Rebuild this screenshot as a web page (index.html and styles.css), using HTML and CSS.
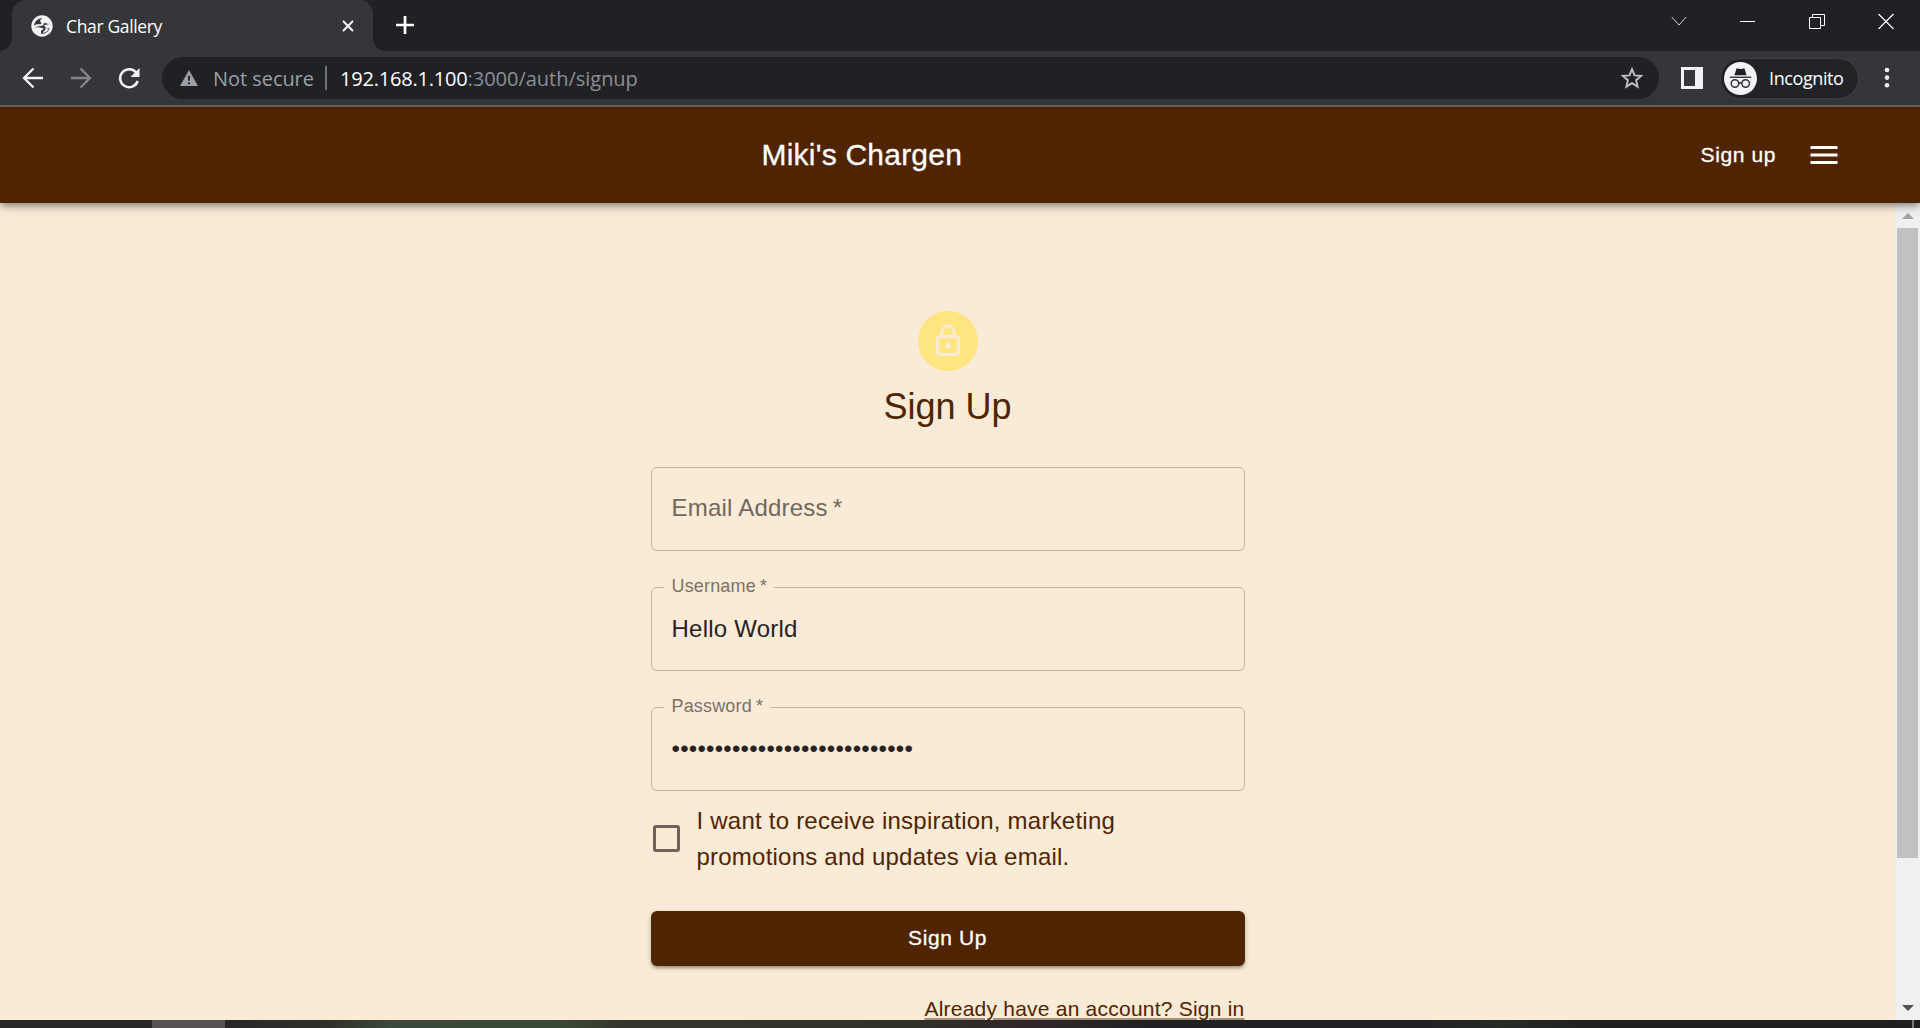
FILE: index.html
```html
<!DOCTYPE html>
<html lang="en">
<head>
<meta charset="utf-8">
<title>Char Gallery</title>
<link rel="stylesheet" href="styles.css">
</head>
<body>
<div class="tabstrip">
  <div class="tab">
    <svg class="globe" viewBox="0 0 22 22"><circle cx="11" cy="11" r="10.700" fill="#f1f3f4"/><path d="M3 10.500C3.500 6.500 7 3.300 11.500 3c-1.500 1-2.300 1.800-2.300 3 0 1.300 1.200 1.300 1.200 2.300 0 .7-.6 1-1.400 1H6.800C5.500 9.300 4.500 9.800 3 10.500zM3.200 12.200H8c2 0 2.300 1 3.700 1 1.200 0 1 1.300 0 1.600-1.300.4-1.700 1-1.700 2v2c4 .5 7.600-2 8.700-5.800-.8.400-2 .500-3 .200-1.500-.5-1.300-2-2.600-2.700-1.200-.6-1-1.800.2-2.300 1.500-.6 2.400.9 5.300.8" fill="#35363a"/><path d="M13.500 13c2.300-.2 2.500 1 4.300 1-1.300 2.300-3.200 3.700-5.800 4-.1-1.400.7-2 1.800-2.600 1.100-.6 1.100-1.900-.3-2.400z" fill="#f1f3f4"/></svg>
    <span class="tab-title">Char Gallery</span>
    <svg class="tab-close" viewBox="0 0 12 12"><path d="M1 1l10 10M11 1L1 11" stroke="#f1f3f4" stroke-width="2"/></svg>
  </div>
  <svg class="new-tab" viewBox="0 0 18 18"><path d="M9 0v18M0 9h18" stroke="#fff" stroke-width="2.700"/></svg>
  <div class="window-controls">
    <svg viewBox="0 0 16 16"><path d="M.8 4L8 12l7.200-8" stroke="#d5d6d7" fill="none"/></svg>
    <svg viewBox="0 0 16 16"><path d="M0 8.500h15" stroke="#fff"/></svg>
    <svg viewBox="0 0 16 16"><path d="M.5 4.500h11v11H.5zM3.500 4.500v-3h12v11h-3.500" stroke="#fff" fill="none"/></svg>
    <svg viewBox="0 0 16 16"><path d="M.5 1l15 15M15.500 1l-15 15" stroke="#fff" stroke-width="1.200"/></svg>
  </div>
</div>

<div class="toolbar">
  <svg class="nav-icon" viewBox="0 0 24 24"><path d="M22 12H3M12.500 2.500L3 12l9.500 9.500" stroke="#f1f3f4" stroke-width="2.300" fill="none"/></svg>
  <svg class="nav-icon" viewBox="0 0 24 24"><path d="M2 12h19M11.500 2.500L21 12l-9.500 9.500" stroke="#85868a" stroke-width="2.300" fill="none"/></svg>
  <svg class="nav-icon" viewBox="0 0 24 24"><path d="M19.300 6.700A9 9 0 1 0 20.700 15" stroke="#f1f3f4" stroke-width="2.500" fill="none"/><path d="M22.500 2v9h-9z" fill="#f1f3f4"/></svg>
  <div class="address">
    <svg class="warning" viewBox="0 0 18 16"><path d="M9 0l9 16H0z" fill="#9aa0a6"/><path d="M9 5.800v5M9 12.200v2" stroke="#202124" stroke-width="1.800"/></svg>
    <span class="insecure">Not secure</span>
    <span class="divider"></span>
    <span class="url"><b>192.168.1.100</b>:3000/auth/signup</span>
    <svg class="star" viewBox="0 0 22 22"><path d="M11 2.200l2.500 6.200 6.600.5-5 4.300 1.500 6.400-5.600-3.500-5.600 3.500 1.500-6.400-5-4.300 6.600-.5z" stroke="#bdc1c6" stroke-width="1.900" fill="none"/></svg>
  </div>
  <svg class="panel" viewBox="0 0 22 22"><path fill-rule="evenodd" d="M0 0h22v22H0zM3 3v16h11V3z" fill="#f1f3f4"/></svg>
  <div class="profile">
    <svg viewBox="0 0 34 34"><circle cx="17" cy="17" r="17" fill="#f1f3f4"/><path d="M13 6.500q4 1.300 8 0l2.300 7.200H10.700z" fill="#202124"/><path d="M6 15.700h22" stroke="#202124" stroke-width="1.300"/><g fill="none" stroke="#303135" stroke-width="1.500"><circle cx="11.300" cy="22.200" r="3.900"/><circle cx="22.300" cy="22.200" r="3.900"/><path d="M15.200 22q1.600-1.200 3.200 0"/></g></svg>
    <span>Incognito</span>
  </div>
  <svg class="dots" viewBox="0 0 6 22"><g fill="#f1f3f4"><circle cx="3" cy="3" r="2.300"/><circle cx="3" cy="10.600" r="2.300"/><circle cx="3" cy="18.300" r="2.300"/></g></svg>
</div>

<header class="appbar">
  <h1 class="brand">Miki's Chargen</h1>
  <a class="appbar-link">Sign up</a>
  <svg class="menu" viewBox="0 0 36 36"><path d="M4.500 27h27v-3h-27v3zm0-7.500h27v-3h-27v3zM4.500 9v3h27V9h-27z" fill="#fff"/></svg>
</header>

<div class="viewport">
  <main class="page">
    <form class="signup">
      <div class="avatar"><svg viewBox="0 0 24 24"><path fill="#faebd7" d="M12 17c1.100 0 2-.9 2-2s-.9-2-2-2-2 .9-2 2 .9 2 2 2zm6-9h-1V6c0-2.760-2.240-5-5-5S7 3.240 7 6v2H6c-1.100 0-2 .9-2 2v10c0 1.100.9 2 2 2h12c1.100 0 2-.9 2-2V10c0-1.100-.9-2-2-2zM8.900 6c0-1.710 1.390-3.100 3.100-3.100s3.100 1.390 3.100 3.100v2H8.900V6zM18 20H6V10h12v10z"/></svg></div>
      <h2 class="heading">Sign Up</h2>
      <div class="fields">
        <div class="field"><span class="placeholder">Email Address<i>*</i></span></div>
        <div class="field"><span class="label">Username<i>*</i></span><span>Hello World</span></div>
        <div class="field"><span class="label">Password<i>*</i></span><span>••••••••••••••••••••••••••••</span></div>
      </div>
      <div class="consent">
        <span class="checkbox"></span>
        <span>I want to receive inspiration, marketing<br>promotions and updates via email.</span>
      </div>
      <div class="submit">Sign Up</div>
      <a class="signin">Already have an account? Sign in</a>
    </form>
  </main>
  <div class="scrollbar">
    <svg viewBox="0 0 12 6"><path d="M0 6l6-6 6 6z" fill="#a3a3a3"/></svg>
    <div class="thumb"></div>
    <svg viewBox="0 0 12 6"><path d="M0 0h12L6 6z" fill="#505050"/></svg>
  </div>
</div>
<div class="taskbar"><span class="task"></span><span class="show-desktop"></span></div>
</body>
</html>
```
FILE: styles.css
```css
* { box-sizing: border-box; }
html, body { margin: 0; height: 1028px; overflow: hidden; }
body { display: flex; flex-direction: column; font-family: "Liberation Sans", Arial, sans-serif; }
svg { display: block; flex: none; }

.tabstrip { display: flex; height: 51px; flex: none; background: #202124; font-family: "Open Sans", sans-serif; }
.tab { position: relative; display: flex; align-items: center; width: 361px; margin-left: 12px; padding: 0 19px 0 19px; background: #35363a; border-radius: 14px 14px 0 0; }
.tab::before, .tab::after { content: ""; position: absolute; bottom: 0; width: 12px; height: 12px; }
.tab::before { left: -12px; background: radial-gradient(circle at 0 0, transparent 11.5px, #35363a 12px); }
.tab::after { right: -12px; background: radial-gradient(circle at 100% 0, transparent 11.5px, #35363a 12px); }
.globe { width: 22px; height: 22px; }
.tab-title { flex: 1; margin-left: 13px; font-size: 17.5px; letter-spacing: -0.35px; line-height: 24px; color: #fff; white-space: nowrap; }
.tab-close { width: 12px; height: 12px; }
.new-tab { width: 18px; height: 18px; margin: 16px 0 0 23px; }
.window-controls { display: flex; gap: 53px; margin: 13px 26px 0 auto; }
.window-controls svg { width: 16px; height: 16px; }

.toolbar { display: flex; align-items: center; height: 56px; flex: none; padding: 0 30px 0 21px; background: #35363a; border-bottom: 2px solid #67625f; font-family: "Open Sans", sans-serif; }
.nav-icon { width: 24px; height: 24px; margin-right: 24px; }
.address { display: flex; align-items: center; width: 1497px; height: 42px; margin-left: -3px; padding: 0 16px 0 18px; border-radius: 21px; background: #202124; color: #9aa0a6; font-size: 20px; white-space: nowrap; }
.warning { width: 18px; height: 16px; }
.insecure { width: 102px; margin-left: 15px; letter-spacing: -.05px; }
.divider { width: 2px; height: 24px; margin: 0 13px 0 10px; background: #6f7276; }
.url { color: #8d8f93; letter-spacing: -.02px; }
.url b { font-weight: 400; color: #fff; letter-spacing: -.2px; }
.star { width: 22px; height: 22px; margin-left: auto; }
.panel { width: 22px; height: 22px; margin-left: 22px; }
.profile { display: flex; align-items: center; width: 139px; height: 41px; margin-left: 17px; padding-left: 3px; border: 1px solid #3f4044; border-radius: 21px; background: #222327; color: #fff; font-size: 18px; letter-spacing: -.4px; }
.profile svg { width: 33px; height: 33px; }
.profile span { margin: -1px 0 0 12px; }
.dots { width: 6px; height: 22px; margin-left: auto; }

.appbar { position: relative; z-index: 1; display: flex; align-items: center; height: 96px; flex: none; padding: 0 78px 0 36px; background: #502400; color: #fff; box-shadow: 0 3px 6px -1px rgba(0,0,0,.32), 0 6px 8px rgba(0,0,0,.1), 0 1px 15px rgba(0,0,0,.1); }
.brand { flex: 1; margin: 0 0 0 -13px; text-align: center; font-size: 30px; font-weight: 400; letter-spacing: .225px; -webkit-text-stroke: .3px #fff; }
.appbar-link { font-size: 21px; letter-spacing: .6px; -webkit-text-stroke: .3px #fff; }
.menu { width: 36px; height: 36px; margin-left: 30px; }

.viewport { display: flex; height: 817px; flex: none; background: #faebd7; }
.page { flex: 1; overflow: hidden; }
.signup { display: flex; flex-direction: column; width: 594px; margin: 0 auto; padding-top: 108px; color: #502400; font-size: 24px; line-height: 36px; letter-spacing: .225px; }
.avatar { display: grid; place-items: center; align-self: center; width: 60px; height: 60px; border-radius: 50%; background: #ffe57f; }
.avatar svg { width: 36px; height: 36px; }
.heading { margin: 12px 0 36px; text-align: center; font-size: 36px; font-weight: 400; line-height: 48px; letter-spacing: 0; }
.fields { display: flex; flex-direction: column; gap: 36px; }
.field { position: relative; display: flex; align-items: center; height: 84px; padding: 0 20px; border: 1px solid #c3b6a6; border-radius: 6px; color: #28231f; }
.field i { font-style: normal; margin-left: 5px; }
.placeholder { margin-top: -2px; color: #706760; }
.label { position: absolute; left: 12px; top: -17px; padding: 0 7px 0 8px; background: #faebd7; color: #7a7168; font-size: 18px; line-height: 30px; letter-spacing: .17px; }
.field .label i { margin-left: 4px; }
.consent { display: flex; align-items: center; margin-top: 12px; }
.checkbox { flex: none; width: 27px; height: 27px; margin: -1px 17px 0 2px; border: 3px solid #6f6259; border-radius: 3px; }
.submit { display: flex; align-items: center; justify-content: center; height: 55px; margin-top: 36px; padding-bottom: 2px; border-radius: 6px; background: #502400; color: #fff; font-size: 21px; letter-spacing: .6px; -webkit-text-stroke: .3px #fff; box-shadow: 0 3px 3px -1px rgba(0,0,0,.25), 0 2px 5px rgba(0,0,0,.2); }
.signin { align-self: flex-end; margin-top: 28px; font-size: 21px; line-height: 30px; text-decoration: underline; text-decoration-color: #aa927f; text-decoration-thickness: 2px; text-underline-offset: 2px; }

.scrollbar { display: flex; flex-direction: column; align-items: center; width: 25px; padding: 10px 0 9px; background: #f0f0f0; }
.scrollbar svg { width: 12px; height: 6px; }
.thumb { width: 21px; height: 630px; margin: 9px 0 auto; background: #c1c1c1; }

.taskbar { display: flex; justify-content: space-between; height: 8px; flex: none; padding: 0 6px 0 152px; background: linear-gradient(90deg, #29262a 0, #29262a 225px, #30302a 330px, #3a4939 390px, #394937 560px, #35362b 620px, #303129 900px, #30262a 1030px, #202124 1150px, #202124 1430px, #242b25 1500px, #1f1f22 1600px, #1f1f22 100%); }
.task { width: 73px; background: #575255; }
.show-desktop { width: 2px; background: #77787a; }
```
